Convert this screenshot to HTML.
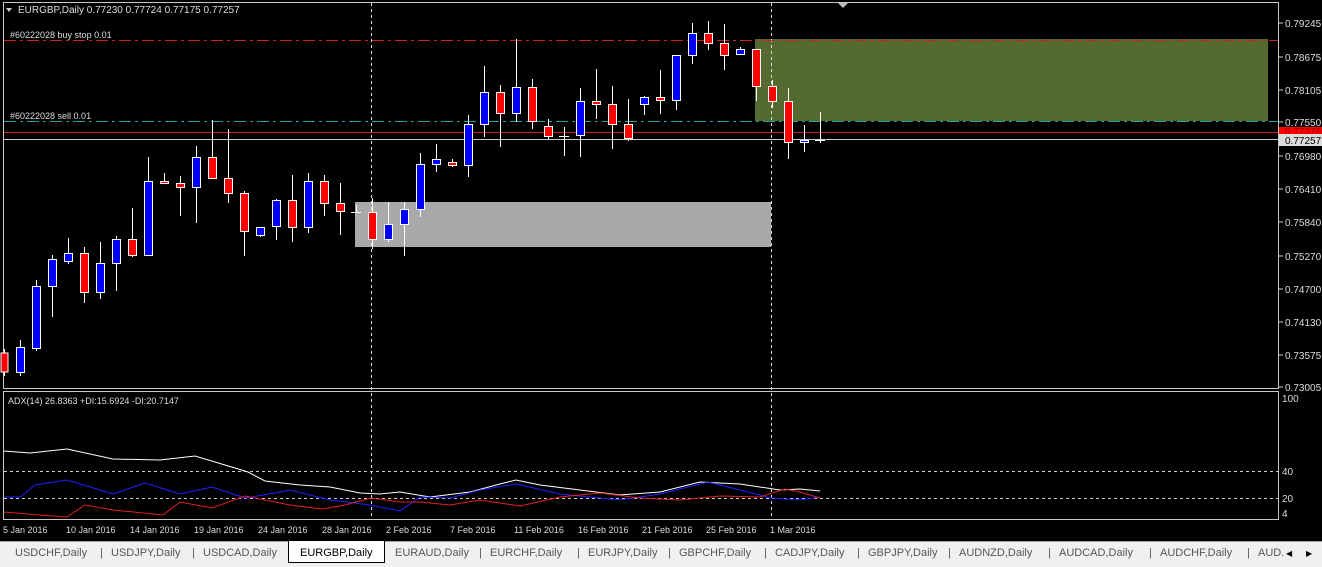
<!DOCTYPE html>
<html><head><meta charset="utf-8"><style>
body{margin:0;width:1322px;height:566px;overflow:hidden;background:#000;font-family:"Liberation Sans",sans-serif}
svg text{font-family:"Liberation Sans",sans-serif}
#tabs{position:absolute;left:0;top:541px;width:1322px;height:25px;background:#f0f0f0;border-top:1px solid #a0a0a0;font-size:11px;color:#555}
#tabs span{position:absolute;top:5px;white-space:nowrap}
#act{position:absolute;left:288px;top:-1px;width:95px;height:21px;background:#fff;border:1px solid #000;border-top:none}
</style></head><body>
<svg width="1322" height="541" style="position:absolute;left:0;top:0">
<rect x="0" y="0" width="1322" height="541" fill="#000"/>
<rect x="755" y="39" width="513" height="82" fill="#536a30"/>
<rect x="355" y="202" width="416" height="45" fill="#a9a9a9"/>
<rect x="3.5" y="2.5" width="1275" height="386" fill="none" stroke="#c8c8c8"/>
<rect x="3.5" y="391.5" width="1275" height="128" fill="none" stroke="#c8c8c8"/>
<line x1="371.5" y1="3" x2="371.5" y2="519" stroke="#ddd" stroke-dasharray="3,3"/>
<line x1="771.5" y1="3" x2="771.5" y2="519" stroke="#ddd" stroke-dasharray="3,3"/>
<line x1="4" y1="40.5" x2="1278" y2="40.5" stroke="#d02020" stroke-dasharray="12,4,3,4"/>
<line x1="4" y1="121.5" x2="1278" y2="121.5" stroke="#20a0a0" stroke-dasharray="12,4,3,4"/>
<line x1="4" y1="132.5" x2="1278" y2="132.5" stroke="#d02020"/>
<line x1="4" y1="139.5" x2="1278" y2="139.5" stroke="#c8c8c8"/>
<line x1="4" y1="471.5" x2="1278" y2="471.5" stroke="#ccc" stroke-dasharray="3,3"/>
<line x1="4" y1="498.5" x2="1278" y2="498.5" stroke="#ccc" stroke-dasharray="3,3"/>
<text x="10" y="38" fill="#ddd" font-size="9">#60222028 buy stop 0.01</text>
<text x="10" y="119" fill="#ddd" font-size="9">#60222028 sell 0.01</text>
<path d="M6 8 L12 8 L9 12 Z" fill="#ccc"/>
<text x="18" y="13" fill="#ddd" font-size="10">EURGBP,Daily  0.77230 0.77724 0.77175 0.77257</text>
<path d="M838 3 L848 3 L843 8 Z" fill="#bbb"/>
<g stroke="#fff" stroke-width="1" shape-rendering="crispEdges">
<line x1="4.5" y1="349" x2="4.5" y2="376"/><rect x="1" y="353" width="7" height="19" fill="#f00"/>
<line x1="20.5" y1="340" x2="20.5" y2="376"/><rect x="16.5" y="347.5" width="8" height="25" fill="#00f"/>
<line x1="36.5" y1="280" x2="36.5" y2="351"/><rect x="32.5" y="286.5" width="8" height="62" fill="#00f"/>
<line x1="52.5" y1="255" x2="52.5" y2="317"/><rect x="48.5" y="259.5" width="8" height="27" fill="#00f"/>
<line x1="68.5" y1="238" x2="68.5" y2="264"/><rect x="64.5" y="253.5" width="8" height="8" fill="#00f"/>
<line x1="84.5" y1="247" x2="84.5" y2="303"/><rect x="80.5" y="253.5" width="8" height="39" fill="#f00"/>
<line x1="100.5" y1="242" x2="100.5" y2="299"/><rect x="96.5" y="263.5" width="8" height="29" fill="#00f"/>
<line x1="116.5" y1="236" x2="116.5" y2="291"/><rect x="112.5" y="239.5" width="8" height="24" fill="#00f"/>
<line x1="132.5" y1="208" x2="132.5" y2="257"/><rect x="128.5" y="239.5" width="8" height="16" fill="#f00"/>
<line x1="148.5" y1="157" x2="148.5" y2="255"/><rect x="144.5" y="181.5" width="8" height="74" fill="#00f"/>
<line x1="164.5" y1="173" x2="164.5" y2="183"/><rect x="160.5" y="181.5" width="8" height="2" fill="#f00"/>
<line x1="180.5" y1="176" x2="180.5" y2="216"/><rect x="176.5" y="183.5" width="8" height="4" fill="#f00"/>
<line x1="196.5" y1="146" x2="196.5" y2="223"/><rect x="192.5" y="157.5" width="8" height="30" fill="#00f"/>
<line x1="212.5" y1="120" x2="212.5" y2="178"/><rect x="208.5" y="157.5" width="8" height="21" fill="#f00"/>
<line x1="228.5" y1="129" x2="228.5" y2="203"/><rect x="224.5" y="178.5" width="8" height="15" fill="#f00"/>
<line x1="244.5" y1="191" x2="244.5" y2="256"/><rect x="240.5" y="193.5" width="8" height="38" fill="#f00"/>
<line x1="260.5" y1="227" x2="260.5" y2="237"/><rect x="256.5" y="227.5" width="8" height="8" fill="#00f"/>
<line x1="276.5" y1="199" x2="276.5" y2="240"/><rect x="272.5" y="200.5" width="8" height="26" fill="#00f"/>
<line x1="292.5" y1="175" x2="292.5" y2="242"/><rect x="288.5" y="200.5" width="8" height="27" fill="#f00"/>
<line x1="308.5" y1="173" x2="308.5" y2="233"/><rect x="304.5" y="181.5" width="8" height="46" fill="#00f"/>
<line x1="324.5" y1="175" x2="324.5" y2="216"/><rect x="320.5" y="181.5" width="8" height="22" fill="#f00"/>
<line x1="340.5" y1="183" x2="340.5" y2="235"/><rect x="336.5" y="203.5" width="8" height="8" fill="#f00"/>
<line x1="351" y1="212.5" x2="361" y2="212.5"/><line x1="356.5" y1="205" x2="356.5" y2="213"/>
<line x1="372.5" y1="198" x2="372.5" y2="249"/><rect x="368.5" y="212.5" width="8" height="27" fill="#f00"/>
<line x1="388.5" y1="202" x2="388.5" y2="242"/><rect x="384.5" y="224.5" width="8" height="15" fill="#00f"/>
<line x1="404.5" y1="202" x2="404.5" y2="256"/><rect x="400.5" y="209.5" width="8" height="15" fill="#00f"/>
<line x1="420.5" y1="153" x2="420.5" y2="217"/><rect x="416.5" y="164.5" width="8" height="45" fill="#00f"/>
<line x1="436.5" y1="144" x2="436.5" y2="172"/><rect x="432.5" y="159.5" width="8" height="5" fill="#00f"/>
<line x1="452.5" y1="159" x2="452.5" y2="167"/><rect x="448.5" y="162.5" width="8" height="3" fill="#f00"/>
<line x1="468.5" y1="115" x2="468.5" y2="177"/><rect x="464.5" y="124.5" width="8" height="41" fill="#00f"/>
<line x1="484.5" y1="66" x2="484.5" y2="137"/><rect x="480.5" y="92.5" width="8" height="32" fill="#00f"/>
<line x1="500.5" y1="85" x2="500.5" y2="147"/><rect x="496.5" y="92.5" width="8" height="21" fill="#f00"/>
<line x1="516.5" y1="39" x2="516.5" y2="122"/><rect x="512.5" y="87.5" width="8" height="26" fill="#00f"/>
<line x1="532.5" y1="79" x2="532.5" y2="129"/><rect x="528.5" y="87.5" width="8" height="34" fill="#f00"/>
<line x1="548.5" y1="119" x2="548.5" y2="139"/><rect x="544.5" y="126.5" width="8" height="10" fill="#f00"/>
<line x1="559" y1="136.5" x2="569" y2="136.5"/><line x1="564.5" y1="127" x2="564.5" y2="156"/>
<line x1="580.5" y1="88" x2="580.5" y2="157"/><rect x="576.5" y="101.5" width="8" height="34" fill="#00f"/>
<line x1="596.5" y1="69" x2="596.5" y2="119"/><rect x="592.5" y="101.5" width="8" height="3" fill="#f00"/>
<line x1="612.5" y1="86" x2="612.5" y2="149"/><rect x="608.5" y="104.5" width="8" height="20" fill="#f00"/>
<line x1="628.5" y1="99" x2="628.5" y2="141"/><rect x="624.5" y="124.5" width="8" height="14" fill="#f00"/>
<line x1="644.5" y1="96" x2="644.5" y2="115"/><rect x="640.5" y="97.5" width="8" height="7" fill="#00f"/>
<line x1="660.5" y1="70" x2="660.5" y2="114"/><rect x="656.5" y="97.5" width="8" height="3" fill="#f00"/>
<line x1="676.5" y1="55" x2="676.5" y2="110"/><rect x="672.5" y="55.5" width="8" height="45" fill="#00f"/>
<line x1="692.5" y1="23" x2="692.5" y2="64"/><rect x="688.5" y="33.5" width="8" height="22" fill="#00f"/>
<line x1="708.5" y1="21" x2="708.5" y2="50"/><rect x="704.5" y="33.5" width="8" height="10" fill="#f00"/>
<line x1="724.5" y1="24" x2="724.5" y2="70"/><rect x="720.5" y="43.5" width="8" height="12" fill="#f00"/>
<line x1="740.5" y1="47" x2="740.5" y2="54"/><rect x="736.5" y="49.5" width="8" height="5" fill="#00f"/>
<line x1="756.5" y1="49" x2="756.5" y2="101"/><rect x="752.5" y="49.5" width="8" height="37" fill="#f00"/>
<line x1="772.5" y1="80" x2="772.5" y2="108"/><rect x="768.5" y="86.5" width="8" height="15" fill="#f00"/>
<line x1="788.5" y1="88" x2="788.5" y2="159"/><rect x="784.5" y="101.5" width="8" height="41" fill="#f00"/>
<line x1="804.5" y1="125" x2="804.5" y2="152"/><rect x="800.5" y="140.5" width="8" height="2" fill="#00f"/>
<line x1="815" y1="140.5" x2="825" y2="140.5"/><line x1="820.5" y1="112" x2="820.5" y2="143"/>
</g>
<g fill="#ddd" font-size="10">
<g stroke="#ccc"><line x1="1279" y1="23" x2="1283" y2="23"/><line x1="1279" y1="57" x2="1283" y2="57"/><line x1="1279" y1="90" x2="1283" y2="90"/><line x1="1279" y1="122" x2="1283" y2="122"/><line x1="1279" y1="156" x2="1283" y2="156"/><line x1="1279" y1="189" x2="1283" y2="189"/><line x1="1279" y1="222" x2="1283" y2="222"/><line x1="1279" y1="256" x2="1283" y2="256"/><line x1="1279" y1="289" x2="1283" y2="289"/><line x1="1279" y1="322" x2="1283" y2="322"/><line x1="1279" y1="355" x2="1283" y2="355"/><line x1="1279" y1="387" x2="1283" y2="387"/></g>
<text x="1285" y="27">0.79245</text><text x="1285" y="61">0.78675</text><text x="1285" y="94">0.78105</text><text x="1285" y="126">0.77550</text><text x="1285" y="160">0.76980</text><text x="1285" y="193">0.76410</text><text x="1285" y="226">0.75840</text><text x="1285" y="260">0.75270</text><text x="1285" y="293">0.74700</text><text x="1285" y="326">0.74130</text><text x="1285" y="359">0.73575</text><text x="1285" y="391">0.73005</text>
<rect x="1279" y="127" width="43" height="9" fill="#f00"/><text x="1285" y="135" fill="#900">0.77376</text>
<rect x="1279" y="134" width="43" height="12" fill="#ddd"/><text x="1285" y="144" fill="#000">0.77257</text>
<text x="1282" y="402">100</text><text x="1282" y="475">40</text><text x="1282" y="502">20</text><text x="1282" y="517">4</text>
<text x="8" y="404" font-size="9">ADX(14) 26.8363 +DI:15.6924 -DI:20.7147</text>
</g>
<polyline fill="none" stroke="#fff" points="4,451 30,453 67,449 113,459 160,460 195,456 235,468 248,472 265,481 300,485 330,487 360,493 380,494 400,492 430,497 470,492 500,484 516,480 540,485 580,490 620,495 660,492 700,482 740,484 780,490 800,489 820,491"/>
<polyline fill="none" stroke="#2020ff" points="4,497 20,497 35,485 67,480 113,494 145,483 180,494 212,487 245,498 275,493 290,490 330,500 370,505 400,511 420,497 450,498 480,490 516,484 560,494 620,500 660,494 708,482 740,490 771,498 800,500 820,497"/>
<polyline fill="none" stroke="#e02020" points="4,512 40,515 67,517 85,505 113,510 163,515 180,502 212,508 245,496 290,505 322,509 345,505 371,498 400,502 420,502 450,505 480,500 520,506 560,497 600,493 640,498 680,500 720,496 760,497 785,489 800,492 820,498"/>
<g fill="#ddd" font-size="9">
<text x="3" y="533">5 Jan 2016</text><text x="66" y="533">10 Jan 2016</text><text x="130" y="533">14 Jan 2016</text><text x="194" y="533">19 Jan 2016</text><text x="258" y="533">24 Jan 2016</text><text x="322" y="533">28 Jan 2016</text><text x="386" y="533">2 Feb 2016</text><text x="450" y="533">7 Feb 2016</text><text x="514" y="533">11 Feb 2016</text><text x="578" y="533">16 Feb 2016</text><text x="642" y="533">21 Feb 2016</text><text x="706" y="533">25 Feb 2016</text><text x="770" y="533">1 Mar 2016</text>
</g>
</svg>
<div id="tabs"><div id="act"></div>
<span style="left:15px">USDCHF,Daily</span><span style="left:100px">|</span>
<span style="left:111px">USDJPY,Daily</span><span style="left:192px">|</span>
<span style="left:203px">USDCAD,Daily</span>
<span style="left:300px;color:#000">EURGBP,Daily</span>
<span style="left:395px">EURAUD,Daily</span><span style="left:479px">|</span>
<span style="left:490px">EURCHF,Daily</span><span style="left:577px">|</span>
<span style="left:588px">EURJPY,Daily</span><span style="left:668px">|</span>
<span style="left:679px">GBPCHF,Daily</span><span style="left:764px">|</span>
<span style="left:775px">CADJPY,Daily</span><span style="left:857px">|</span>
<span style="left:868px">GBPJPY,Daily</span><span style="left:948px">|</span>
<span style="left:959px">AUDNZD,Daily</span><span style="left:1048px">|</span>
<span style="left:1059px">AUDCAD,Daily</span><span style="left:1149px">|</span>
<span style="left:1160px">AUDCHF,Daily</span><span style="left:1247px">|</span>
<span style="left:1258px">AUD.</span><span style="left:1286px;font-size:8px;top:7px;color:#000">◀</span><span style="left:1306px;font-size:8px;top:7px;color:#000">▶</span>
</div>
</body></html>
